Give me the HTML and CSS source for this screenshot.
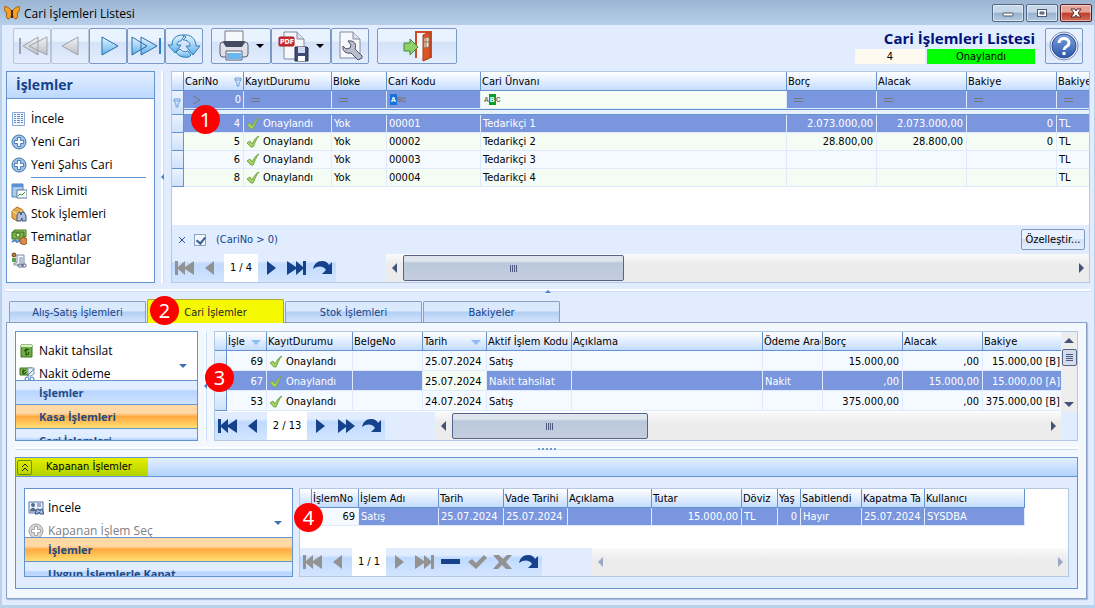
FILE: index.html
```html
<!DOCTYPE html>
<html lang="tr">
<head>
  <meta charset="UTF-8">
  <meta name="viewport" content="width=device-width, initial-scale=1.0">
  <title>Cari İşlemleri Listesi</title>
  <link rel="stylesheet" href="styles.css">
</head>
<body>
  <!-- shared icons -->
  <svg class="sprite" xmlns="http://www.w3.org/2000/svg">
    <defs>
      <linearGradient id="blueFill" x1="0" y1="0" x2="0" y2="1">
        <stop offset="0" stop-color="#e6f5ff"/><stop offset="1" stop-color="#5fb0ea"/>
      </linearGradient>
      <linearGradient id="grayFill" x1="0" y1="0" x2="0" y2="1">
        <stop offset="0" stop-color="#f3f4f6"/><stop offset="1" stop-color="#b9bcc2"/>
      </linearGradient>
      <linearGradient id="helpFill" x1="0" y1="0" x2="0" y2="1">
        <stop offset="0" stop-color="#7fa3de"/><stop offset="1" stop-color="#2a56a8"/>
      </linearGradient>
    </defs>
    <symbol id="first" viewBox="0 0 20 16"><path d="M0 1h3v6l7-6v6l9-6v14l-9-6v6l-7-6v6H0z"/></symbol>
    <symbol id="prev" viewBox="0 0 20 16"><path d="M13 1v14L4 8z"/></symbol>
    <symbol id="next" viewBox="0 0 20 16"><path d="M6 1v14l9-7z"/></symbol>
    <symbol id="last" viewBox="0 0 20 16"><path d="M19 1h-3v6l-7-6v6L0 1v14l9-6v6l7-6v6h3z"/></symbol>
    <symbol id="nextpage" viewBox="0 0 20 16"><path d="M2 1v14l8-6v6l9-7-9-7v6z"/></symbol>
    <symbol id="redo" viewBox="0 0 20 16"><path d="M0 9C1 4 4 1 9 1c4 0 6 2 7 4l3-3v12H9l4-4c-2-4-8-5-13-1z"/></symbol>
    <symbol id="minus" viewBox="0 0 20 16"><path d="M0 5h19v5H0z"/></symbol>
    <symbol id="confirm" viewBox="0 0 20 16"><path d="M1 8l4-3 4 4 8-8 3 3L9 15z"/></symbol>
    <symbol id="cancel" viewBox="0 0 20 16"><path d="M0 1h6l4 4 4-4h5l-6 7 6 7h-6l-4-4-4 4H0l6-7z"/></symbol>
    <symbol id="tick" viewBox="0 0 14 13"><path d="M1 8l3-2 2 3c2-4 4-7 7-8-3 3-4 7-6 11H5z" fill="#a5d45f" stroke="#7ba651" stroke-width="1"/></symbol>
    <symbol id="plus" viewBox="0 0 16 16"><circle cx="8" cy="8" r="7" fill="#9dc3ea" stroke="#4474ab"/><path d="M6.500 3.500h3v3h3v3h-3v3h-3v-3h-3v-3h3z" fill="#fff" stroke="#4c7db5"/></symbol>
    <symbol id="plusoff" viewBox="0 0 16 16"><circle cx="8" cy="8" r="7" fill="#d8d8d8" stroke="#a0a0a0"/><path d="M6.500 3.500h3v3h3v3h-3v3h-3v-3h-3v-3h3z" fill="#fff" stroke="#a5a5a5"/></symbol>
    <symbol id="funnel" viewBox="0 0 8 10"><path d="M1 1h6v2L5 6v3H3V6L1 3zM1 3h6" fill="#dcebff" stroke="#6f9fd8"/></symbol>
  </svg>

  <header class="titlebar">
    <svg class="logo" viewBox="0 0 16 16"><path d="M8 7C6 3 3 1 0 2c0 3 1 5 3 6-1 2-1 5 1 6 2 0 3-3 4-5 1 2 2 5 4 5 2-1 2-4 1-6 2-1 3-3 3-6-3-1-6 1-8 5z" fill="#f7a023" stroke="#9b5c12"/><path d="M8 5v8" stroke="#4a2b0c" stroke-width="2"/></svg>
    <span class="title-text">Cari İşlemleri Listesi</span>
    <div class="window-buttons">
      <button aria-label="Küçült"><svg viewBox="0 0 14 10"><rect x="2" y="5" width="10" height="3" rx="1" fill="#fff" stroke="#4e5a6b"/></svg></button>
      <button aria-label="Büyüt"><svg viewBox="0 0 14 10"><rect x="2.500" y="1.500" width="9" height="7" fill="#fff" stroke="#4e5a6b"/><path d="M5 4h4v2H5z" fill="#7b95b5" stroke="#4e5a6b"/></svg></button>
      <button class="close" aria-label="Kapat"><svg viewBox="0 0 14 10"><path d="M2 1h4l1 2 1-2h4L9 5l3 4H8L7 7 6 9H2l3-4z" fill="#fff" stroke="#5b2b2b"/></svg></button>
    </div>
  </header>

  <main class="window">
    <div class="toolbar">
      <div class="tool-group">
        <button class="tool off" disabled aria-label="İlk"><svg viewBox="0 0 32 32"><path d="M22 7v18L7 16zM31 7v18L13 16z" fill="url(#grayFill)" stroke="#9da1aa"/><path d="M4 8v16" stroke="#9da1aa" stroke-width="2"/></svg></button>
        <button class="tool off" disabled aria-label="Önceki"><svg viewBox="0 0 32 32"><path d="M24 7v18L8 16z" fill="url(#grayFill)" stroke="#9da1aa"/></svg></button>
        <button class="tool" aria-label="Sonraki"><svg viewBox="0 0 32 32"><path d="M10 7v18l16-9z" fill="url(#blueFill)" stroke="#2d6da8"/></svg></button>
        <button class="tool" aria-label="Son"><svg viewBox="0 0 32 32"><path d="M2 7v18l15-9zM11 7v18l16-9z" fill="url(#blueFill)" stroke="#2d6da8"/><path d="M30 8v16" stroke="#2d7fc8" stroke-width="2"/></svg></button>
        <button class="tool" aria-label="Yenile"><svg viewBox="0 0 32 32"><path d="M4 15C4 9 8 5 14 5l2 1-3 5c-3 0-4 2-4 4h4l-6 8-7-8z" fill="url(#blueFill)" stroke="#2d7fb8"/><path d="M15 5c8-1 13 4 13 11h4l-7 9-7-9h4c0-4-3-6-7-6l3-3z" fill="url(#blueFill)" stroke="#2d7fb8"/><path d="M8 22c2 4 7 6 13 5l2-2-3-4c-3 1-6 1-8-2z" fill="url(#blueFill)" stroke="#2d7fb8"/></svg></button>
      </div>
      <div class="tool-group">
        <button class="tool drop" aria-label="Yazdır"><svg viewBox="0 0 32 32"><path d="M7 1h18v14H7z" fill="#f7f8fb" stroke="#75798a"/><path d="M2 15q0-3 3-3l3 4h16l3-4q3 0 3 3v9q0 3-3 3H5q-3 0-3-3z" fill="#dfe1ea" stroke="#585c70"/><path d="M5 11h22l-3 6H8z" fill="#454b63"/><path d="M8 21h16v9H8z" fill="#f7f8fb" stroke="#5d6174"/><path d="M9 23h14v6H9z" fill="#6cb6f0"/></svg><i class="caret"></i></button>
        <button class="tool drop" aria-label="PDF kaydet"><svg viewBox="0 0 32 32"><path d="M6 2h13l7 7v20H6z" fill="#f7f8fb" stroke="#858aa0"/><path d="M19 2v7h7" fill="#dde0ea" stroke="#858aa0"/><rect x="1" y="7" width="15" height="9" rx="1" fill="#d02b2b" stroke="#a31f1f"/><text x="2" y="14" class="pdf-text">PDF</text><path d="M17 17h12l1 1v13H17z" fill="#3e4b72" stroke="#29324f"/><path d="M20 17h7v6h-7z" fill="#cfdaf0"/><path d="M20 26h7v5h-7z" fill="#fff"/></svg><i class="caret"></i></button>
        <button class="tool" aria-label="Ayarlar"><svg viewBox="0 0 32 32"><path d="M6 2h13l7 7v19H6z" fill="#f7f8fb" stroke="#858aa0"/><path d="M19 2v7h7" fill="#dde0ea" stroke="#858aa0"/><path d="M14 11l3 4-1 3-4 1-3-3c-1 5 3 8 8 7l7 7 4-2v-2l-7-7c2-5-1-9-7-8z" fill="#b9bfcc" stroke="#4c5369"/></svg></button>
      </div>
      <div class="tool-group">
        <button class="tool wide" aria-label="Çıkış"><svg viewBox="0 0 32 32"><path d="M15 28V2h15v25h-5" fill="#f6f8fc" stroke="#cf4a25" stroke-width="2"/><path d="M22 5l7-3v26l-7 3z" fill="#dd5428" stroke="#b23a16"/><path d="M23 8l5-1v10l-5 1z" fill="#f2e6d2" stroke="#9a6a55"/><path d="M25 8v9M23 12h5" stroke="#9a6a55"/><path d="M3 13h6V9l8 8-8 8v-4H3z" fill="#8fd06a" stroke="#3f8c34"/></svg></button>
      </div>
      <div class="record-info">
        <h1>Cari İşlemleri Listesi</h1>
        <div class="record-fields">
          <input class="rec-no" value="4" aria-label="Cari No" readonly>
          <input class="rec-state" value="Onaylandı" aria-label="Kayıt durumu" readonly>
        </div>
      </div>
      <button class="tool" aria-label="Yardım"><svg viewBox="0 0 32 32"><circle cx="16" cy="16" r="14" fill="#f4f7fd" stroke="#7a8db8"/><circle cx="16" cy="16" r="12" fill="url(#helpFill)" stroke="#2a4f98"/><path d="M11 13c0-6 10-6 10 0 0 4-5 3-5 7M16 22v3" fill="none" stroke="#fff" stroke-width="3"/></svg></button>
    </div>

    <section class="top-row">
      <nav class="side-panel">
        <h2>İşlemler</h2>
        <a href="#"><svg viewBox="0 0 16 16"><path d="M1.500 1.500h12v13h-12z" fill="#f2f7fd" stroke="#8ba9d2"/><path d="M3 3h2v1H3zM3 5h2v1H3zM3 7h2v1H3zM3 9h2v1H3zM3 11h2v1H3zM6 3h3v1H6zM6 5h3v1H6zM6 7h3v1H6zM6 9h3v1H6zM6 11h3v1H6zM10 3h2v1h-2zM10 5h2v1h-2zM10 7h2v1h-2zM10 9h2v1h-2zM10 11h2v1h-2z" fill="#5f8fcf"/></svg>İncele</a>
        <a href="#"><svg><use href="#plus"/></svg>Yeni Cari</a>
        <a href="#"><svg><use href="#plus"/></svg>Yeni Şahıs Cari</a>
        <hr>
        <a href="#"><svg viewBox="0 0 16 16"><path d="M1 1h11v13H1z" fill="#a9cbef" stroke="#5580b5"/><path d="M1 1h11v3H1z" fill="#5d92cf"/><path d="M6 7h10v8H6z" fill="#fff" stroke="#5a7a9d"/><path d="M7 13l2-2 2 1 3-3" fill="none" stroke="#3c9a3c"/></svg>Risk Limiti</a>
        <a href="#"><svg viewBox="0 0 16 16"><path d="M1 5l5-4 6 3v7l-6 4-5-3z" fill="#e8ab50" stroke="#a96f22"/><path d="M1 5l5 3 6-4" fill="none" stroke="#fbe0ac"/><path d="M6 9l2-3h1l1 3 1-3h2l2 4v5h-4v-3l-1 3H6z" fill="#aebfd9" stroke="#40557c"/></svg>Stok İşlemleri</a>
        <a href="#"><svg viewBox="0 0 16 16"><path d="M3 1h12v7H3z" fill="#9ccb62" stroke="#427a25"/><path d="M1 3h12v7H1z" fill="#78b344" stroke="#386d20"/><circle cx="7" cy="6" r="2" fill="#e6f5b8" stroke="#386d20"/><path d="M1 13l3-2 2 2 3-2" fill="none" stroke="#4f85c5" stroke-width="2"/><path d="M9 10l3-2 4 2v4l-3 2-4-2z" fill="#d98b4a" stroke="#8c4f22"/></svg>Teminatlar</a>
        <a href="#"><svg viewBox="0 0 16 16"><circle cx="3" cy="3" r="2" fill="#b07d3a" stroke="#6d4917"/><path d="M1 6h4v4H1z" fill="#5da450"/><path d="M6 3h7v10H3v-2h3z" fill="#fafcff" stroke="#7286a8"/><path d="M8 6h4M8 8h4M8 10h4" stroke="#7286a8"/><rect x="7" y="12" width="5" height="3" rx="1" fill="none" stroke="#566a8c"/><rect x="11" y="12" width="4" height="3" rx="1" fill="none" stroke="#566a8c"/></svg>Bağlantılar</a>
      </nav>
      <div class="vsplit"><i></i></div>

      <div class="grid-box">
        <div class="grid-area">
          <table class="grid cari-grid">
            <colgroup><col class="w12"><col class="w60"><col class="w88"><col class="w55"><col class="w94"><col><col class="w90"><col class="w90"><col class="w90"><col class="w32"></colgroup>
            <thead>
              <tr><th></th><th><div class="th-flex">CariNo <svg class="funnel"><use href="#funnel"/></svg></div></th><th>KayıtDurumu</th><th>Bloke</th><th>Cari Kodu</th><th>Cari Ünvanı</th><th>Borç</th><th>Alacak</th><th>Bakiye</th><th class="tight">Bakiye</th></tr>
              <tr class="filter">
                <td class="ind" rowspan="2"><svg class="funnel"><use href="#funnel"/></svg></td>
                <td><div class="th-flex"><svg class="gt" viewBox="0 0 9 10"><path d="M1 1l7 4-7 4" fill="none" stroke="#777"/></svg><input value="0" aria-label="CariNo filtresi"></div></td>
                <td><i class="eq"></i></td><td><i class="eq"></i></td>
                <td><span class="abc start"><b>A</b>BC</span></td>
                <td class="open"><span class="abc mid">A<b>B</b>C</span></td>
                <td><i class="eq"></i></td><td><i class="eq"></i></td><td><i class="eq"></i></td><td><i class="eq"></i></td>
              </tr>
              <tr class="divider"><td colspan="9"></td></tr>
            </thead>
            <tbody>
              <tr class="selected"><td class="ind"></td><td class="num">4</td><td><svg class="tick"><use href="#tick"/></svg>Onaylandı</td><td>Yok</td><td>00001</td><td>Tedarikçi 1</td><td class="num">2.073.000,00</td><td class="num">2.073.000,00</td><td class="num">0</td><td>TL</td></tr>
              <tr><td class="ind"></td><td class="num">5</td><td><svg class="tick"><use href="#tick"/></svg>Onaylandı</td><td>Yok</td><td>00002</td><td>Tedarikçi 2</td><td class="num">28.800,00</td><td class="num">28.800,00</td><td class="num">0</td><td>TL</td></tr>
              <tr class="alt"><td class="ind"></td><td class="num">6</td><td><svg class="tick"><use href="#tick"/></svg>Onaylandı</td><td>Yok</td><td>00003</td><td>Tedarikçi 3</td><td></td><td></td><td></td><td>TL</td></tr>
              <tr><td class="ind"></td><td class="num">8</td><td><svg class="tick"><use href="#tick"/></svg>Onaylandı</td><td>Yok</td><td>00004</td><td>Tedarikçi 4</td><td></td><td></td><td></td><td>TL</td></tr>
            </tbody>
          </table>
        </div>
        <div class="filter-bar">
          <button class="clear" aria-label="Filtreyi temizle"><svg viewBox="0 0 8 8"><path d="M1 1l6 6M7 1L1 7" stroke="#2c5591" stroke-width="1"/></svg></button>
          <input type="checkbox" id="filterOn" checked>
          <label for="filterOn">(CariNo &gt; 0)</label>
          <button class="customize">Özelleştir...</button>
        </div>
        <div class="nav-row">
          <div class="navigator">
            <button disabled aria-label="İlk kayıt"><svg><use href="#first"/></svg></button>
            <button disabled aria-label="Önceki kayıt"><svg><use href="#prev"/></svg></button>
            <span class="pos">1 / 4</span>
            <button aria-label="Sonraki kayıt"><svg><use href="#next"/></svg></button>
            <button aria-label="Son kayıt"><svg><use href="#last"/></svg></button>
            <button aria-label="Yenile"><svg><use href="#redo"/></svg></button>
          </div>
          <div class="hscroll"><i class="arrow-left"></i><div class="track"><div class="thumb"></div></div><i class="arrow-right"></i></div>
        </div>
        <span class="marker m1">1</span>
      </div>
    </section>

    <div class="hsplit"><i class="up"></i></div>

    <div class="tabs" role="tablist">
      <button role="tab">Alış-Satış İşlemleri</button>
      <button role="tab" class="active">Cari İşlemler<span class="marker m2">2</span></button>
      <button role="tab">Stok İşlemleri</button>
      <button role="tab">Bakiyeler</button>
    </div>

    <section class="tab-page">
      <div class="mid-row">
        <nav class="bar-panel">
          <div class="bar-items">
            <a href="#"><svg viewBox="0 0 16 16"><path d="M2 2h11v12H2z" fill="#6fae45" stroke="#3c7422"/><path d="M2 2h11v2H2z" fill="#d9efc0"/><path d="M7 5v7q3 0 3-3M5 8l5-2" fill="none" stroke="#123d08"/></svg>Nakit tahsilat</a>
            <a href="#"><svg viewBox="0 0 16 16"><path d="M1 2h12v7H1z" fill="#7eb94f" stroke="#3c7422"/><path d="M4 3v5q3 0 3-2M3 6l4-2" fill="none" stroke="#1a430c"/><path d="M9 2h6v6l-3 2H9z" fill="#edf2fa" stroke="#7f95b8"/><path d="M8 10l7-7" stroke="#5d7397"/><circle cx="8" cy="13" r="2" fill="none" stroke="#3f75bb"/><circle cx="13" cy="13" r="2" fill="none" stroke="#3f75bb"/></svg>Nakit ödeme</a>
            <i class="more"></i>
          </div>
          <button class="bar-head">İşlemler</button>
          <button class="bar-head hot">Kasa İşlemleri</button>
          <button class="bar-head">Cari İşlemleri</button>
        </nav>
        <div class="vsplit"><i></i></div>
        <div class="grid-box">
          <div class="scroll-area">
            <table class="grid tx-grid">
              <colgroup><col class="w12"><col class="w40"><col class="w86"><col class="w70"><col class="w64"><col class="w85"><col><col class="w60"><col class="w80"><col class="w80"><col class="w78"></colgroup>
              <thead>
                <tr><th></th><th><div class="th-flex">İşle <i class="sort"></i></div></th><th>KayıtDurumu</th><th>BelgeNo</th><th><div class="th-flex">Tarih <i class="sort"></i></div></th><th>Aktif İşlem Kodu</th><th>Açıklama</th><th><div class="clip">Ödeme Arac</div></th><th>Borç</th><th>Alacak</th><th>Bakiye</th></tr>
              </thead>
              <tbody>
                <tr class="alt"><td class="ind"></td><td class="num">69</td><td><svg class="tick"><use href="#tick"/></svg>Onaylandı</td><td></td><td>25.07.2024</td><td>Satış</td><td></td><td></td><td class="num">15.000,00</td><td class="num">,00</td><td class="num tight">15.000,00 [B]</td></tr>
                <tr class="selected"><td class="ind"></td><td class="num">67</td><td><svg class="tick"><use href="#tick"/></svg>Onaylandı</td><td></td><td class="focus">25.07.2024</td><td>Nakit tahsilat</td><td></td><td>Nakit</td><td class="num">,00</td><td class="num">15.000,00</td><td class="num tight">15.000,00 [A]</td></tr>
                <tr class="alt"><td class="ind"></td><td class="num">53</td><td><svg class="tick"><use href="#tick"/></svg>Onaylandı</td><td></td><td>24.07.2024</td><td>Satış</td><td></td><td></td><td class="num">375.000,00</td><td class="num">,00</td><td class="num tight">375.000,00 [B]</td></tr>
              </tbody>
            </table>
            <div class="vscroll"><i class="arrow-up"></i><div class="vthumb"></div><i class="arrow-down"></i></div>
          </div>
          <div class="nav-row with-corner">
            <div class="navigator">
              <button aria-label="İlk kayıt"><svg><use href="#first"/></svg></button>
              <button aria-label="Önceki kayıt"><svg><use href="#prev"/></svg></button>
              <span class="pos long">2 / 13</span>
              <button aria-label="Sonraki kayıt"><svg><use href="#next"/></svg></button>
              <button aria-label="Sonraki sayfa"><svg><use href="#nextpage"/></svg></button>
              <button aria-label="Yenile"><svg><use href="#redo"/></svg></button>
            </div>
            <div class="hscroll"><i class="arrow-left"></i><div class="track"><div class="thumb"></div></div><i class="arrow-right"></i></div>
          </div>
          <span class="marker m3">3</span>
        </div>
      </div>

      <div class="hsplit"><i class="dots"></i></div>

      <section class="group">
        <div class="group-head">
          <div class="group-title">
            <button aria-label="Daralt"><svg viewBox="0 0 10 10"><path d="M2 5l3-3 3 3M2 9l3-3 3 3" fill="none" stroke="#222" stroke-width="1"/></svg></button>
            <span>Kapanan İşlemler</span>
          </div>
        </div>
        <div class="group-body">
          <nav class="bar-panel large">
            <div class="bar-items">
              <a href="#"><svg viewBox="0 0 16 16"><path d="M1 2h14v11H1z" fill="#eaf2fc" stroke="#5577a8"/><circle cx="5" cy="5" r="2" fill="#53698f"/><path d="M2 11q3-6 6 0zM9 4h4M9 6h4" fill="#53698f" stroke="#53698f"/><path d="M7 14l2-5h2l1 2 1-2h1l2 5h-4l-1-2-1 2z" fill="#9fb8dd" stroke="#3d5785"/></svg>İncele</a>
              <a href="#" class="off"><svg><use href="#plusoff"/></svg>Kapanan İşlem Seç</a>
              <i class="more"></i>
            </div>
            <button class="bar-head hot">İşlemler</button>
            <button class="bar-head">Uygun İşlemlerle Kapat</button>
          </nav>
          <div class="grid-box">
            <div class="grid-area">
              <table class="grid closed-grid">
                <colgroup><col class="w12"><col class="w47"><col class="w80"><col class="w65"><col class="w64"><col class="w84"><col class="w90"><col class="w36"><col class="w23"><col class="w61"><col class="w63"><col class="w100"></colgroup>
                <thead>
                  <tr><th></th><th>İşlemNo</th><th>İşlem Adı</th><th>Tarih</th><th>Vade Tarihi</th><th>Açıklama</th><th>Tutar</th><th>Döviz</th><th>Yaş</th><th>Sabitlendi</th><th>Kapatma Ta</th><th>Kullanıcı</th></tr>
                </thead>
                <tbody>
                  <tr class="selected"><td class="ind"></td><td class="num focus blue">69</td><td>Satış</td><td>25.07.2024</td><td>25.07.2024</td><td></td><td class="num">15.000,00</td><td>TL</td><td class="num">0</td><td>Hayır</td><td>25.07.2024</td><td>SYSDBA</td></tr>
                </tbody>
              </table>
            </div>
            <div class="nav-row">
              <div class="navigator">
                <button disabled aria-label="İlk kayıt"><svg><use href="#first"/></svg></button>
                <button disabled aria-label="Önceki kayıt"><svg><use href="#prev"/></svg></button>
                <span class="pos">1 / 1</span>
                <button disabled aria-label="Sonraki kayıt"><svg><use href="#next"/></svg></button>
                <button disabled aria-label="Son kayıt"><svg><use href="#last"/></svg></button>
                <button aria-label="Sil"><svg><use href="#minus"/></svg></button>
                <button disabled aria-label="Onayla"><svg><use href="#confirm"/></svg></button>
                <button disabled aria-label="Vazgeç"><svg><use href="#cancel"/></svg></button>
                <button aria-label="Yenile"><svg><use href="#redo"/></svg></button>
              </div>
              <div class="hscroll off"><i class="arrow-left"></i><div class="track"></div><i class="arrow-right"></i></div>
            </div>
            <span class="marker m4">4</span>
          </div>
        </div>
      </section>
    </section>
  </main>
</body>
</html>
```

FILE: styles.css
```css
* {
  box-sizing: border-box;
}

body {
  margin: 0;
  min-height: 100vh;
  display: flex;
  flex-direction: column;
  background: #b9d1ea;
  font-family: "DejaVu Sans Condensed", "Noto Sans", sans-serif;
  font-size: 11px;
  line-height: 16px;
  color: #000;
}

button, input {
  font: inherit;
  color: inherit;
  margin: 0;
  padding: 0;
}

.sprite {
  position: absolute;
  width: 0;
  height: 0;
}

/* Title bar */
.titlebar {
  height: 25px;
  display: flex;
  align-items: center;
  padding: 0 3px 0 4px;
  background: linear-gradient(#9ab4d2, #b7cfe9);
  font-family: "Open Sans", "Noto Sans", sans-serif;
  font-size: 12px;
}

.logo {
  width: 16px;
  height: 16px;
  margin-right: 4px;
}

.title-text {
  flex: 1;
  padding-top: 2px;
}

.window-buttons {
  display: flex;
  gap: 2px;
}

.window-buttons button {
  width: 32px;
  height: 18px;
  display: flex;
  align-items: center;
  justify-content: center;
  border: 1px solid #526885;
  border-radius: 2px;
  background: linear-gradient(#c6d7ea 45%, #97b1ce 50%, #b5cbe2);
  box-shadow: inset 0 0 0 1px rgba(255, 255, 255, 0.5);
}

.window-buttons .close {
  border-color: #52202a;
  background: linear-gradient(#e6a497 45%, #bf3a26 50%, #d0705a);
}

.window-buttons svg {
  width: 14px;
  height: 10px;
}

.window {
  flex: 1;
  display: flex;
  flex-direction: column;
  margin: 0 1px 3px 2px;
  padding: 3px 4px 6px;
  background: #e1edfe;
}

/* Toolbar */
.toolbar {
  display: flex;
  padding: 0 7px 7px;
}

.tool-group {
  display: flex;
  margin-right: 8px;
}

.tool {
  width: 38px;
  height: 36px;
  display: flex;
  align-items: center;
  justify-content: center;
  border: 1px solid #7c98c4;
  border-radius: 2px;
  background: linear-gradient(#e9f2ff 35%, #d3e2f8 40%, #e3eeff);
}

.tool.off {
  border-color: #b9c4d8;
}

.tool svg {
  width: 32px;
  height: 32px;
}

.tool.drop {
  width: 60px;
  justify-content: flex-start;
  padding-left: 6px;
}

.tool.wide {
  width: 80px;
}

.caret {
  margin-left: 6px;
  border: 4px solid transparent;
  border-top-color: #000;
  border-bottom: 0;
}

.pdf-text {
  font: bold 7px "DejaVu Sans Condensed", sans-serif;
  fill: #fff;
}

.record-info {
  width: 180px;
  margin: 0 10px 0 auto;
}

.record-info h1 {
  margin: 0;
  height: 21px;
  font: bold 15px/20px "Open Sans", "Noto Sans", sans-serif;
  color: #00127a;
  text-align: right;
  white-space: nowrap;
}

.record-fields {
  display: flex;
  gap: 2px;
}

.record-fields input {
  height: 15px;
  min-width: 0;
  border: 0;
  text-align: center;
}

.record-fields .rec-no {
  width: 70px;
  background: #fffaf0;
}

.record-fields .rec-state {
  flex: 1;
  background: #0f0;
}

/* Side panel */
.top-row {
  display: flex;
  height: 212px;
}

.side-panel {
  width: 149px;
  border: 1px solid #6593cf;
  background: #fff;
  font-family: "Open Sans", "Noto Sans", sans-serif;
  font-size: 12px;
}

.side-panel h2 {
  margin: 0 0 8px;
  padding-left: 9px;
  height: 27px;
  border-bottom: 1px solid #6593cf;
  background: linear-gradient(#e4efff, #bdd8ff);
  font-size: 14px;
  line-height: 26px;
  color: #15428b;
}

.side-panel a,
.bar-items a {
  display: flex;
  align-items: center;
  gap: 4px;
  height: 23px;
  padding-left: 4px;
  color: #000;
  text-decoration: none;
  white-space: nowrap;
}

.side-panel a svg,
.bar-items a svg {
  width: 16px;
  height: 16px;
  flex: none;
}

.side-panel hr {
  margin: 1px 8px 1px 24px;
  border: 0;
  border-top: 1px solid #6593cf;
}

/* Splitters */
.vsplit {
  width: 16px;
  flex: none;
  display: flex;
  align-items: center;
  background: linear-gradient(90deg, transparent 6px, #fff 6px, #fff 8px, #c6dcfa 8px, #c6dcfa 9px, transparent 9px);
}

.vsplit i {
  margin-left: 6px;
  border: 3px solid transparent;
  border-right-color: #4f7fc0;
  border-left: 0;
}

.hsplit {
  height: 16px;
  flex: none;
  display: flex;
  justify-content: center;
  align-items: center;
  background: linear-gradient(transparent 6px, #fff 6px, #fff 8px, #c6dcfa 8px, #c6dcfa 9px, transparent 9px);
}

.hsplit .up {
  border: 3px solid transparent;
  border-bottom-color: #4f7fc0;
  border-top: 0;
}

.hsplit .dots {
  width: 18px;
  height: 2px;
  background: repeating-linear-gradient(90deg, #6d9ad4 0, #6d9ad4 2px, transparent 2px, transparent 4px);
}

/* Grids */
.grid-box {
  position: relative;
  flex: 1;
  min-width: 0;
  display: flex;
  flex-direction: column;
  border: 1px solid #b3c8e2;
  background: #fff;
}

.grid-area {
  flex: 1;
  min-height: 0;
  overflow: hidden;
}

.grid {
  width: 100%;
  table-layout: fixed;
  border-collapse: separate;
  border-spacing: 0;
}

.closed-grid {
  width: 724px;
}

.grid th,
.grid td {
  height: 18px;
  padding: 1px 2px 0;
  overflow: hidden;
  white-space: nowrap;
  text-align: left;
  font-weight: normal;
  line-height: 16px;
  border-right: 1px solid #dfeafc;
  border-bottom: 1px solid #dfeafc;
}

.grid th {
  height: 19px;
  padding: 2px 1px 0;
  border-color: #6593cf;
  background: linear-gradient(#fff, #c4dcff);
}

.grid th.tight {
  padding-right: 0;
}

.clip {
  overflow: hidden;
}

.cari-grid tr > :last-child,
.tx-grid tr > :last-child {
  border-right: 0;
}

.grid tbody td {
  background: #f4fcf4;
}

.grid .alt td {
  background: #f4faff;
}

.grid .selected td {
  background: #7a96df;
  color: #fff;
}

.grid .selected td.focus {
  background: #f4fcf4;
  color: #000;
}

.grid .selected td.blue {
  background: #f4faff;
}

.grid td.num {
  text-align: right;
  padding-right: 3px;
}

.grid td.tight {
  padding: 2px 1px 0;
}

.grid tr td.ind,
.grid .alt td.ind,
.grid .selected td.ind {
  padding: 0 1px;
  border-color: #6593cf;
  background: linear-gradient(#eaf3ff, #cfe1fb);
}

.tx-grid tbody td {
  height: 20px;
  padding-top: 2px;
}

.th-flex {
  display: flex;
  align-items: center;
  justify-content: space-between;
}

.funnel {
  display: block;
  width: 8px;
  height: 10px;
}

.tick {
  width: 14px;
  height: 13px;
  margin-right: 3px;
  vertical-align: -3px;
}

.sort {
  border: 5px solid transparent;
  border-top-color: #8ebcf5;
  border-bottom: 0;
  margin-right: 4px;
}

.grid .filter td {
  padding-top: 0;
  background: #7a96df;
}

.grid .filter td.open {
  background: #f4fcf4;
}

.filter input {
  width: 24px;
  height: 16px;
  border: 0;
  background: none;
  color: #fff;
  text-align: right;
}

.gt {
  width: 9px;
  height: 10px;
  margin-left: 6px;
}

.eq {
  display: block;
  width: 9px;
  height: 4px;
  margin-left: 5px;
  border: solid #777;
  border-width: 1px 0;
}

.abc {
  display: flex;
  padding-left: 1px;
  font: bold 8px/11px "Liberation Mono", monospace;
  color: #777;
}

.abc b {
  padding: 0 1px;
  color: #fff;
}

.abc.start b {
  background: #1473d8;
}

.abc.mid b {
  background: #0b9a2c;
}

.grid .divider td {
  height: 6px;
  padding: 0;
  border: solid #6593cf;
  border-width: 1px 0;
  background: #e8f2ff;
}

/* Filter bar and record navigator */
.filter-bar {
  height: 29px;
  flex: none;
  display: flex;
  align-items: center;
  padding: 0 4px 0 6px;
  background: #e1edfe;
  color: #15428b;
}

.clear {
  width: 8px;
  height: 8px;
  margin-right: 8px;
  border: 0;
  background: none;
}

.clear svg {
  display: block;
  width: 8px;
  height: 8px;
}

.filter-bar input {
  appearance: none;
  width: 12px;
  height: 12px;
  margin-right: 10px;
  border: 1px solid #8ea4c4;
  background: #f3f6fb;
}

.filter-bar input:checked::after {
  content: "";
  display: block;
  width: 4px;
  height: 7px;
  margin-left: 3px;
  border: solid #3b5f9c;
  border-width: 0 2px 2px 0;
  transform: rotate(40deg);
}

.customize {
  width: 64px;
  height: 21px;
  margin-left: auto;
  border: 1px solid #7c98c4;
  border-radius: 2px;
  background: linear-gradient(#eaf2ff 45%, #d1e1f9 50%, #e3eeff);
  color: #000;
  white-space: nowrap;
}

.nav-row {
  flex: none;
  height: 28px;
  display: flex;
  background: #e1edfe;
}

.navigator {
  display: flex;
  margin-right: 50px;
  background: linear-gradient(#e1edfe 25%, #bfdaff 35%, #d3e5ff);
}

.navigator button {
  width: 26px;
  display: flex;
  align-items: center;
  justify-content: center;
  border: 0;
  background: none;
}

.navigator svg {
  width: 20px;
  height: 16px;
  fill: #15428b;
}

.navigator button:disabled svg {
  fill: #929292;
}

.pos {
  width: 34px;
  background: #fff;
  line-height: 28px;
  text-align: center;
}

.pos.long {
  width: 40px;
}

.hscroll {
  flex: 1;
  display: flex;
  align-items: center;
  background: linear-gradient(#fafafa, #ececec 40%);
}

.with-corner .hscroll {
  margin-right: 16px;
}

.track {
  flex: 1;
  height: 26px;
}

.thumb {
  width: 33%;
  height: 26px;
  border: 1px solid #55648c;
  border-radius: 2px;
  background:
    repeating-linear-gradient(90deg, #4b597e 0, #4b597e 1px, transparent 1px, transparent 2px) center / 8px 7px no-repeat,
    linear-gradient(#dfe5ed 20%, #bac8db 30%, #c3cfdf);
}

.arrow-left, .arrow-right {
  width: 5px;
  margin: 0 6px;
  border: 5px solid transparent;
}

.arrow-left {
  border-right-color: #44527a;
  border-left: 0;
}

.arrow-right {
  border-left-color: #44527a;
  border-right: 0;
  margin: 0 5px 0 6px;
}

.off .arrow-left {
  border-right-color: #9aa7c8;
}

.off .arrow-right {
  border-left-color: #9aa7c8;
}

.scroll-area {
  flex: 1;
  min-height: 0;
  display: flex;
  overflow: hidden;
}

.scroll-area .grid {
  flex: 1;
  min-width: 0;
  height: 79px;
}

.vscroll {
  width: 16px;
  flex: none;
  display: flex;
  flex-direction: column;
  align-items: center;
  background: #ededed;
}

.arrow-up, .arrow-down {
  margin: 6px 0;
  border: 5px solid transparent;
}

.arrow-up {
  border-bottom-color: #44527a;
  border-top: 0;
}

.arrow-down {
  margin: auto 0 5px;
  border-top-color: #44527a;
  border-bottom: 0;
}

.vthumb {
  width: 15px;
  height: 17px;
  border: 1px solid #55648c;
  border-radius: 2px;
  background:
    repeating-linear-gradient(#4b597e 0, #4b597e 1px, transparent 1px, transparent 2px) center / 7px 8px no-repeat,
    #d3dce8;
}

/* Tabs */
.tabs {
  height: 23px;
  display: flex;
  align-items: flex-end;
  gap: 1px;
  padding-left: 3px;
}

.tabs button {
  position: relative;
  width: 137px;
  height: 21px;
  padding-top: 2px;
  border: 1px solid #8a9fc8;
  border-bottom: 0;
  border-radius: 2px 2px 0 0;
  background: linear-gradient(#dbe9fd 45%, #b3cff5 50%, #d3e4fb);
  color: #15428b;
}

.tabs .active {
  z-index: 1;
  height: 24px;
  margin: 0 0 -1px;
  border-color: #a9a93a;
  background: #f5f900;
  color: #222;
}

.tab-page {
  flex: 1;
  display: flex;
  flex-direction: column;
  margin-right: 3px;
  padding: 8px 8px 9px;
  border: 1px solid #8a9fc8;
  background: #f3f8ff;
  box-shadow: 1px 1px 1px #a9bfe0;
}

.mid-row {
  display: flex;
  height: 110px;
}

/* Collapsible side bars */
.bar-panel {
  width: 183px;
  flex: none;
  display: flex;
  flex-direction: column;
  overflow: hidden;
  border: 1px solid #6593cf;
  background: #fff;
  font-family: "Open Sans", "Noto Sans", sans-serif;
  font-size: 12px;
}

.bar-panel.large {
  width: 269px;
}

.bar-items {
  position: relative;
  height: 48px;
  flex: none;
  padding-top: 7px;
  overflow: hidden;
}

.bar-items a {
  padding-left: 3px;
}

.bar-items .off {
  color: #808080;
}

.more {
  position: absolute;
  right: 10px;
  bottom: 12px;
  border: 4px solid transparent;
  border-top-color: #3f70b8;
  border-bottom: 0;
}

.bar-head {
  height: 24px;
  flex: none;
  padding-left: 23px;
  border: 0;
  border-top: 1px solid #6593cf;
  background: linear-gradient(#e1eeff 35%, #b8d5ff 45%, #cfe2ff);
  color: #1f4a87;
  font-size: 11px;
  font-weight: bold;
  text-align: left;
}

.bar-head.hot {
  background: linear-gradient(#ffd9a5 35%, #ffaa40 50%, #ffdf74);
}

/* Closed transactions group */
.group {
  flex: 1;
  display: flex;
  flex-direction: column;
  border: 1px solid #6593cf;
  background: #e1edfe;
}

.group-head {
  height: 19px;
  border-bottom: 1px solid #6593cf;
  background: linear-gradient(#e4efff, #b3d3ff);
}

.group-title {
  width: 132px;
  height: 18px;
  display: flex;
  align-items: center;
  gap: 14px;
  padding-left: 1px;
  background: linear-gradient(#e2ee00, #b3d300);
}

.group-title button {
  width: 15px;
  height: 15px;
  display: flex;
  align-items: center;
  justify-content: center;
  border: 1px solid #6f8a1c;
  border-radius: 2px;
  background: none;
}

.group-title svg {
  width: 10px;
  height: 10px;
}

.group-body {
  height: 111px;
  display: flex;
  gap: 6px;
  padding: 11px 8px;
}

/* Numbered red markers */
.marker {
  position: absolute;
  z-index: 2;
  width: 29px;
  height: 29px;
  border-radius: 50%;
  background: #f00;
  color: #fff;
  font: 20px/29px "Noto Sans", sans-serif;
  text-align: center;
}

.m1 {
  top: 33px;
  left: 19px;
}

.m2 {
  top: -4px;
  left: 2px;
}

.m3 {
  top: 31px;
  left: -10px;
}

.m4 {
  top: 14px;
  left: -6px;
}

/* Column widths */
.w12 { width: 12px; }
.w23 { width: 23px; }
.w32 { width: 32px; }
.w36 { width: 36px; }
.w40 { width: 40px; }
.w47 { width: 47px; }
.w55 { width: 55px; }
.w60 { width: 60px; }
.w61 { width: 61px; }
.w63 { width: 63px; }
.w64 { width: 64px; }
.w65 { width: 65px; }
.w70 { width: 70px; }
.w78 { width: 78px; }
.w80 { width: 80px; }
.w84 { width: 84px; }
.w85 { width: 85px; }
.w86 { width: 86px; }
.w88 { width: 88px; }
.w90 { width: 90px; }
.w94 { width: 94px; }
.w100 { width: 100px; }
```
